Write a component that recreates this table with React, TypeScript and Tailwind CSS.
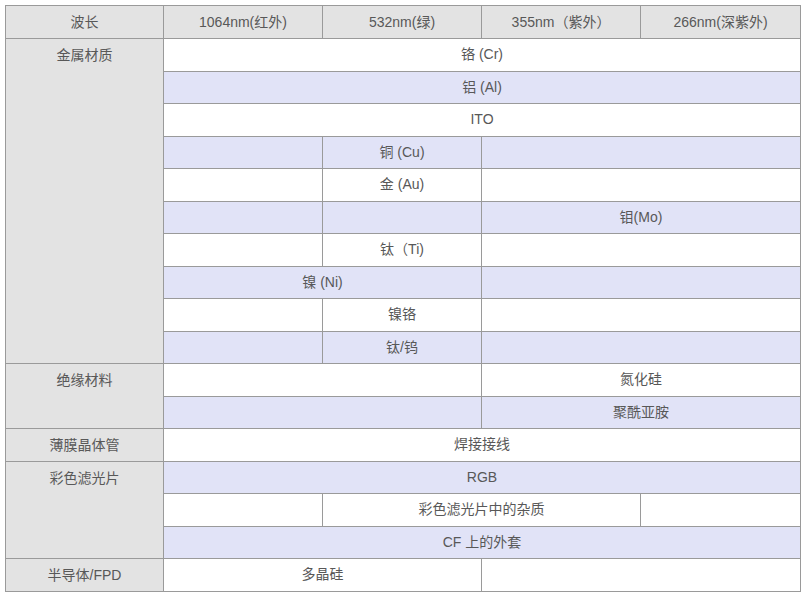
type Cell = { text?: string; span?: number; rows?: number; head?: boolean }

const rows: { bg: 'w' | 'l'; cells: Cell[] }[] = [
  { bg: 'w', cells: [{ text: '金属材质', rows: 10, head: true }, { text: '铬 (Cr)', span: 4 }] },
  { bg: 'l', cells: [{ text: '铝 (Al)', span: 4 }] },
  { bg: 'w', cells: [{ text: 'ITO', span: 4 }] },
  { bg: 'l', cells: [{}, { text: '铜 (Cu)' }, { span: 2 }] },
  { bg: 'w', cells: [{}, { text: '金 (Au)' }, { span: 2 }] },
  { bg: 'l', cells: [{}, {}, { text: '钼(Mo)', span: 2 }] },
  { bg: 'w', cells: [{}, { text: '钛（Ti)' }, { span: 2 }] },
  { bg: 'l', cells: [{ text: '镍 (Ni)', span: 2 }, { span: 2 }] },
  { bg: 'w', cells: [{}, { text: '镍铬' }, { span: 2 }] },
  { bg: 'l', cells: [{}, { text: '钛/钨' }, { span: 2 }] },
  { bg: 'w', cells: [{ text: '绝缘材料', rows: 2, head: true }, { span: 2 }, { text: '氮化硅', span: 2 }] },
  { bg: 'l', cells: [{ span: 2 }, { text: '聚酰亚胺', span: 2 }] },
  { bg: 'w', cells: [{ text: '薄膜晶体管', head: true }, { text: '焊接接线', span: 4 }] },
  { bg: 'l', cells: [{ text: '彩色滤光片', rows: 3, head: true }, { text: 'RGB', span: 4 }] },
  { bg: 'w', cells: [{}, { text: '彩色滤光片中的杂质', span: 2 }, {}] },
  { bg: 'l', cells: [{ text: 'CF 上的外套', span: 4 }] },
  { bg: 'w', cells: [{ text: '半导体/FPD', head: true }, { text: '多晶硅', span: 2 }, { span: 2 }] },
]

const headers = ['波长', '1064nm(红外)', '532nm(绿)', '355nm（紫外）', '266nm(深紫外)']

export default function App() {
  return (
    <div className="bg-white w-[809px] h-[602px] pt-[5px] pl-[5px] font-['Liberation_Sans','Noto_Sans_CJK_SC',sans-serif] text-[14px] text-[#585858]">
      <table className="w-[795px] table-fixed border-collapse">
        <colgroup>
          <col className="w-[158px]" />
          <col className="w-[159px]" />
          <col className="w-[159px]" />
          <col className="w-[159px]" />
          <col className="w-[160px]" />
        </colgroup>
        <thead>
          <tr className="h-[33px]">
            {headers.map((h) => (
              <th key={h} className="border border-[#9a9a9a] bg-[#e3e3e3] font-normal text-center align-middle p-0">
                {h}
              </th>
            ))}
          </tr>
        </thead>
        <tbody>
          {rows.map((r, i) => (
            <tr key={i} className={i % 2 === 0 ? 'h-[32.5px] bg-white' : 'h-[32.5px] bg-[#e1e3f7]'}>
              {r.cells.map((c, j) =>
                c.head ? (
                  <td
                    key={j}
                    rowSpan={c.rows}
                    className="border border-[#9a9a9a] bg-[#e3e3e3] text-center align-top p-0 pt-[6px] leading-[20px]"
                  >
                    {c.text}
                  </td>
                ) : (
                  <td key={j} colSpan={c.span} className="border border-[#9a9a9a] text-center align-middle p-0">
                    {c.text}
                  </td>
                )
              )}
            </tr>
          ))}
        </tbody>
      </table>
    </div>
  )
}
